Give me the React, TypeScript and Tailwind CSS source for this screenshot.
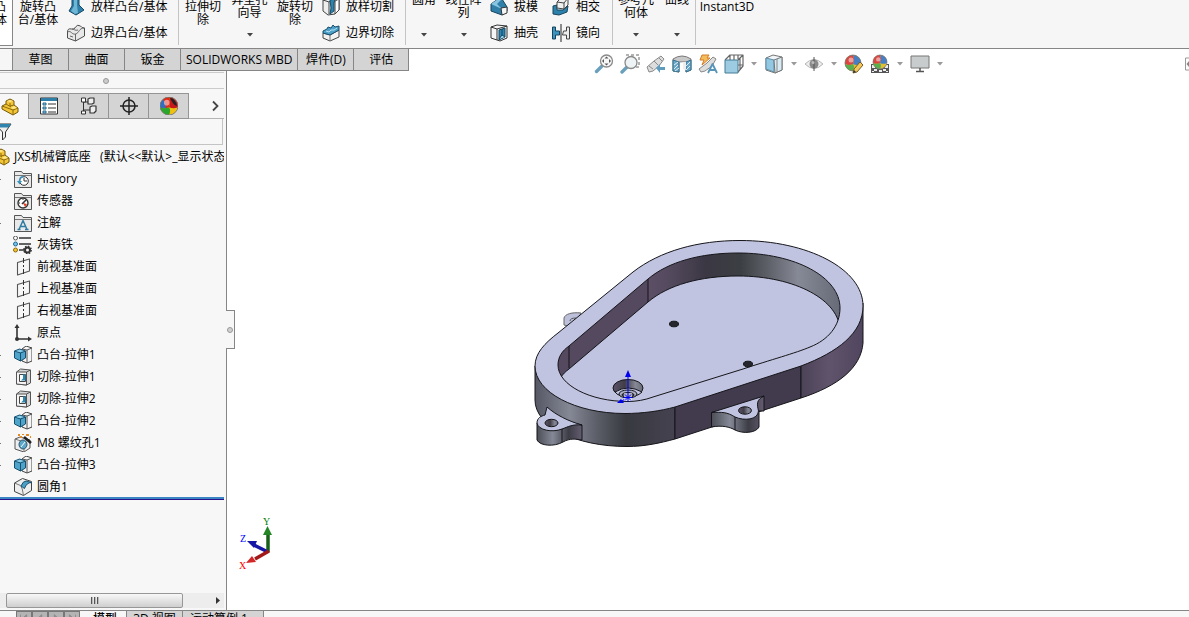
import React from "react";

type P = { children?: React.ReactNode };

const Icon = ({ children, size = "w-[18px] h-[18px]" }: P & { size?: string }) => (
  <svg viewBox="0 0 18 18" className={`${size} shrink-0`} strokeLinejoin="round" aria-hidden="true">
    {children}
  </svg>
);

/* ---------- ribbon icons ---------- */
const LoftBoss = () => (
  <Icon>
    <path d="M5 -2h7v9l5 5-8 5-7-4 3-5z" fill="#2f7fa8" stroke="#174a66" />
    <path d="M7 -2h3v9l1 8-3 1-4-3 3-5z" fill="#6db6d6" />
  </Icon>
);
const BoundaryBoss = () => (
  <Icon>
    <path d="M.500 8q0-4 4-3 3 1 4-2 2-3 5-1 1 2 4 2v8l-9 5-8-3z" fill="#e8e8e8" stroke="#4c4c4c" />
    <path d="M.500 8c4-2 4 3 8 2s3-6 9-6M8.500 10v7M5 5c2 0 3 2 6 1M3 12l3 1" fill="none" stroke="#666" />
  </Icon>
);
const LoftCut = () => (
  <Icon>
    <path d="M1 2l6-3 10 1v12l-4 4-7 1-5-4z" fill="#eee" stroke="#444" />
    <path d="M1 2l6 2v12M7 4l4-3" fill="none" stroke="#444" />
    <path d="M8 2l5-1-1 4v8l-4 3 1-6z" fill="#2f85ae" stroke="#164c68" />
    <path d="M13 3l4-2v11l-4 4z" fill="#fff" stroke="#444" />
  </Icon>
);
const BoundaryCut = () => (
  <Icon>
    <path d="M1 9l7 2 9-5v7l-9 4-7-3z" fill="#f2f2f2" stroke="#444" />
    <path d="M1 9V7l4-2 1-2 3 1 2-3 2 2 4-1v4l-9 5z" fill="#4c9fc6" stroke="#184f6d" />
    <path d="M4 7l3 1 2-2 3 0 3-2" fill="none" stroke="#b5e0f2" />
    <path d="M8 11v6" stroke="#777" />
  </Icon>
);
const Draft = () => (
  <Icon>
    <path d="M1 6l7-5 4 0 5 8v4l-5 4-11-4z" fill="#2f7fa8" stroke="#16445f" />
    <path d="M1 6l7-5h4l-5 5 5 5z" fill="#88c5e1" />
    <path d="M11 10l6-1v6l-5 2z" fill="#f5f5f5" stroke="#333" />
  </Icon>
);
const Shell = () => (
  <Icon>
    <path d="M1 3l6-2 10 1v12l-7 3-9-3z" fill="#f6f6f6" stroke="#333" />
    <path d="M1 3l6 2v11M7 5l10-3" fill="none" stroke="#333" />
    <path d="M9 6l6-2v9l-6 3z" fill="#2a86b1" stroke="#16445f" />
    <path d="M9 15l3-4 3 2M12 11V5" fill="#a6d8ee" stroke="#16445f" />
  </Icon>
);
const Intersect = () => (
  <Icon>
    <path d="M1 8l4-1v5h6l5-4-1 6-8 3-6-1z" fill="#2d82ab" stroke="#16445f" />
    <path d="M5 4l5-5 6 1v7l-4 4-7-1z" fill="#f0f0f0" stroke="#444" />
    <path d="M5 4l7 1v6M12 5l4-5" fill="none" stroke="#444" />
  </Icon>
);
const Mirror = () => (
  <Icon size="w-[18px] h-[18px]">
    <path d="M.500 3h3v4h4v4h-4v4h-3z" fill="#3c93bd" stroke="#16445f" />
    <path d="M17.500 3h-3v4h-3l-1 4h4v4h3z" fill="#eee" stroke="#444" />
    <path d="M9 0v18" stroke="#222" />
  </Icon>
);

/* ---------- heads-up toolbar icons ---------- */
const ToolIcon = ({ children }: P) => (
  <svg viewBox="0 0 20 20" className="h-5 w-5 shrink-0" strokeLinejoin="round" aria-hidden="true">
    {children}
  </svg>
);
const ZoomFit = () => (
  <ToolIcon>
    <path d="M2.500 17.500l5-5" stroke="#6ba0bd" strokeWidth="3.400" strokeLinecap="round" />
    <circle cx="12.500" cy="7" r="6" fill="#f8f8f8" stroke="#8a8a8a" strokeWidth="1.300" />
    <path d="M12.500 2.500l2 2h-4zM12.500 11.500l2-2h-4zM8 7l2-2v4zM17 7l-2-2v4z" fill="#555" />
  </ToolIcon>
);
const ZoomArea = () => (
  <ToolIcon>
    <path d="M6 1h13v12H8" fill="none" stroke="#666" strokeDasharray="3 2" />
    <path d="M2 18l5-5" stroke="#6ba0bd" strokeWidth="3.400" strokeLinecap="round" />
    <circle cx="11" cy="8.500" r="6" fill="#eef3f5" stroke="#8a8a8a" strokeWidth="1.300" />
  </ToolIcon>
);
const Previous = () => (
  <ToolIcon>
    <path d="M1 13l7-6 7-5 3 3-5 7-6 5-4 1z" fill="#ddd" stroke="#8a8a8a" />
    <path d="M8 7l4 4M13 4l3 3M3 12l4 3" stroke="#8a8a8a" fill="none" />
    <path d="M10 14l4-4v3h5v3h-5v3z" fill="#5f9cbd" />
  </ToolIcon>
);
const Section = () => (
  <ToolIcon>
    <path d="M1 5q9-6 18 0v11l-5 2V8H7v10l-6-1z" fill="#c9c9c9" stroke="#777" />
    <path d="M1 6l6 2v10l-6-1zM19 6l-5 2v10l5-2z" fill="#69a7c8" stroke="#37718f" />
    <path d="M2 11l4-3M2 15l4-4M3 17l4-3M14 12l4-4M14 16l4-4" stroke="#fff" strokeWidth=".8" />
    <path d="M7 8h7v8l-3-1V9z" fill="#eee" />
  </ToolIcon>
);
const DynamicView = () => (
  <ToolIcon>
    <path d="M1 15l8-6 6-6 3 2-4 7-7 5-4 1z" fill="#ddd" stroke="#888" />
    <path d="M4 1h7L9 4h3l-8 7 2-5H2z" fill="#f4bd5c" stroke="#d47c2a" />
    <path d="M10 19l4.500-9 4.500 9M12 16h5" stroke="#5694b8" strokeWidth="1.800" fill="none" />
  </ToolIcon>
);
const Orientation = () => (
  <ToolIcon>
    <path d="M1 6l5-5h13v11l-5 6M14 6l5-5M6 1v5M14 1v4M10 1v5M14 11h5M16 4v11" fill="none" stroke="#666" strokeWidth="1.200" />
    <rect x="1" y="6" width="13" height="13" fill="#9dcbe1" stroke="#457a95" />
  </ToolIcon>
);
const DisplayStyle = () => (
  <ToolIcon>
    <path d="M2 4l7-3 9 2v13l-7 3-9-3z" fill="#eff5f8" stroke="#757575" />
    <path d="M2 4l8 2v12l-8-3z" fill="#92c8e2" stroke="#5e8da4" />
    <path d="M10 6l8-3v13l-7 3z" fill="#d7ebf4" stroke="#757575" />
    <path d="M13 5v13" stroke="#888" />
  </ToolIcon>
);
const Eye = () => (
  <ToolIcon>
    <path d="M1 10q9-9 18 0q-9 9-18 0z" fill="#eee" stroke="#b5b5b5" />
    <circle cx="10" cy="10" r="4.500" fill="#8a8a8a" />
    <path d="M10 3v14" stroke="#555" />
    <circle cx="9" cy="8.500" r="1.500" fill="#bbb" />
  </ToolIcon>
);
const Ball = ({ cx = 9, cy = 9, r = 8, vivid = false }: { cx?: number; cy?: number; r?: number; vivid?: boolean }) => (
  <g transform={`translate(${cx} ${cy}) scale(${r / 8})`}>
    <circle r="8" fill={vivid ? "#f0c010" : "#e2bd35"} />
    <path d="M0 -8A8 8 0 0 0 -8 1Q-4 3 0 1Q2 -4 0 -8z" fill={vivid ? "#e02818" : "#db4640"} />
    <path d="M0 -8A8 8 0 0 1 8 1Q4 3 0 1Q2 -4 0 -8z" fill={vivid ? "#c81818" : "#477fc7"} />
    <path d="M-8 1A8 8 0 0 0 0 8Q2 4 0 1Q-4 3 -8 1z" fill={vivid ? "#2ba52b" : "#5baf4d"} />
    {vivid && <path d="M-8 1A8 8 0 0 1 -5 -6Q-3 -2 -3 2Q-6 2 -8 1z" fill="#2c6fc4" />}
    <circle cx="-2" cy="-3" r="2.500" fill="#fff" opacity=".5" />
    <circle r="8" fill="none" stroke="#777" strokeWidth=".8" />
  </g>
);
const Appearance = () => (
  <ToolIcon>
    <Ball />
    <path d="M9 19l1-4 6-7 3 3-6 7z" fill="#f1c859" stroke="#765b24" />
    <path d="M9 19l1-3 2 2z" fill="#333" />
  </ToolIcon>
);
const Scene = () => (
  <ToolIcon>
    <path d="M1 10h18v9H1z" fill="#555" />
    <path d="M2 11h3v3H2zM15 11h3v3h-3zM4 15h3v2H4zM9 16h3v2H9zM13 15h3v2h-3zM2 17h2v1H2zM16 17h2v1h-2z" fill="#eee" />
    <Ball cx={10} cy={8} r={7} />
  </ToolIcon>
);
const Monitor = () => (
  <ToolIcon>
    <rect x="1" y="2" width="18" height="12" fill="#c9cccc" stroke="#777" />
    <path d="M10 14v3M6 17.500h8" stroke="#555" strokeWidth="1.500" />
  </ToolIcon>
);

/* ---------- feature tree icons ---------- */
const PartIcon = () => (
  <Icon>
    <path d="M1 8l4-2V3l4-2 4 2v4l4 3v4l-5 3-11-6z" fill="#f3c637" stroke="#765809" />
    <path d="M5 6l5 3M9 5v3l4-1M12 12l5-2M12 12v5M1 8l11 4" fill="none" stroke="#8b6a0d" />
    <path d="M6 3l3-1 3 1-3 1zM10 10l3-2 3 2-4 1z" fill="#ffe88c" />
  </Icon>
);
const Folder = ({ children }: P) => (
  <Icon>
    <path d="M.500 3V1.500h7L9 3.500h8.500v14H.500z" fill="#e9e9e9" stroke="#555" />
    <path d="M1 5.500h16" stroke="#777" />
    {children}
  </Icon>
);
const HistoryIcon = () => (
  <Folder>
    <circle cx="10" cy="11" r="4.300" fill="#fff" stroke="#333" />
    <path d="M10 8v3h3" fill="none" stroke="#333" />
    <path d="M3 11h5l-2.500 3.500z" fill="#3a91bd" />
    <path d="M5.500 11q0-4 4-4.500" fill="none" stroke="#3a91bd" strokeWidth="1.500" />
  </Folder>
);
const SensorIcon = () => (
  <Folder>
    <circle cx="9" cy="11" r="5" fill="#fff" stroke="#333" strokeWidth="1.400" />
    <path d="M9 11l4 1-2 3z" fill="#e43a20" />
    <path d="M8 12l4-4" stroke="#333" strokeWidth="1.600" />
    <path d="M5 11h1M9 7v1" stroke="#333" />
  </Folder>
);
const NoteIcon = () => (
  <Folder>
    <path d="M5 15.500l4-9 4 9M6.500 12.500h5M3.500 15.500h3M11 15.500h3.500" fill="none" stroke="#2f7ba3" strokeWidth="1.500" />
  </Folder>
);
const MaterialIcon = () => (
  <svg viewBox="0 0 19 18" className="-ml-px h-[18px] w-[19px] shrink-0" aria-hidden="true">
    <path d="M6 2h12M6 8h12M6 14h5" stroke="#333" strokeWidth="1.600" />
    <circle cx="2.500" cy="2" r="2" fill="#fff" stroke="#555" />
    <circle cx="2.500" cy="8" r="2" fill="#70c4ee" stroke="#25678d" />
    <circle cx="2.500" cy="14" r="2" fill="#f5c52c" stroke="#8b6a0d" />
    <circle cx="14.500" cy="14" r="2.500" fill="none" stroke="#333" strokeWidth="2" />
    <circle cx="14.500" cy="14" r="3.700" fill="none" stroke="#333" strokeWidth="1.400" strokeDasharray="1.500 1.400" />
  </svg>
);
const PlaneIcon = () => (
  <Icon>
    <path d="M3.500 4.500l12-3.500v12l-12 4z" fill="none" stroke="#555" strokeWidth="1.100" />
    <path d="M9.500 0v18" stroke="#333" strokeDasharray="5 2 2 2" />
  </Icon>
);
const OriginIcon = () => (
  <Icon>
    <path d="M3 3v12h12" fill="none" stroke="#333" strokeWidth="1.600" />
    <path d="M3 0l2.500 4h-5zM18 15l-4-2.500v5z" fill="#333" />
    <circle cx="3" cy="15" r="2" fill="#333" />
  </Icon>
);
const BossIcon = () => (
  <Icon>
    <path d="M8 3l4-3 6 2v13l-5 2-5-2z" fill="#f5f5f5" stroke="#444" />
    <path d="M8 3l5 1v13M13 4l5-2" fill="none" stroke="#555" />
    <path d="M.500 5l5-2 6 2v7l-5 3-6-3z" fill="#4ea3cb" stroke="#18506e" />
    <path d="M.500 5l6 2v8M6.500 7l5-2" fill="none" stroke="#18506e" />
    <path d="M2 5l4-1 4 1-4 1z" fill="#9ad6ef" />
  </Icon>
);
const CutIcon = () => (
  <Icon>
    <path d="M2.500 4l4-3 10 1v13l-4 2-10-1z" fill="#d6d6d6" stroke="#555" />
    <path d="M2.500 4l10 0v13l-10-1z" fill="#f4f4f4" stroke="#555" />
    <path d="M12.500 4l4-2" stroke="#555" />
    <path d="M5.500 6.500h6v7h-6z" fill="#fff" stroke="#444" />
    <path d="M7 12.500l2-2v-4h2.500v6z" fill="#2d87b3" />
  </Icon>
);
const HoleIcon = () => (
  <Icon>
    <path d="M1 5l5-2 10 3v8l-6 4-9-3z" fill="#eee" stroke="#555" />
    <path d="M1 5l9 3v10" fill="none" stroke="#777" />
    <ellipse cx="9" cy="10.500" rx="4" ry="4.500" fill="#5ca7ca" stroke="#2b536a" />
    <path d="M7 13l4-5" stroke="#fff" />
    <path d="M10 3l7 6" stroke="#222" strokeWidth="2.600" />
    <path d="M4 1h2M8 0h2M12 1h3M6 3h2M16 3h1" stroke="#e58a22" strokeWidth="2" />
  </Icon>
);
const FilletIcon = () => (
  <Icon>
    <path d="M.500 5l8-4.500 9 3v9l-8 5-9-4z" fill="#eee" stroke="#444" />
    <path d="M.500 5l6 2.500q2 2 3 10" fill="none" stroke="#777" />
    <path d="M7 8q2-5 5-5l5.500 1.500q-5 0-7 6z" fill="#4ba0c8" stroke="#1b526f" />
  </Icon>
);

/* ---------- building blocks ---------- */
const Caret = ({ light = false }: { light?: boolean }) => (
  <svg viewBox="0 0 6 4" className="h-1 w-1.5 shrink-0" aria-hidden="true">
    <path d="M0 0h6L3 3.500z" fill={light ? "#999" : "#444"} />
  </svg>
);

const Big = ({ lines, w, menu = false }: { lines: string[]; w: string; menu?: boolean }) => (
  <button className={`flex shrink-0 flex-col items-center ${w} ${menu ? "h-[55px]" : "h-[48px]"}`}>
    {lines.map((l) => (
      <span key={l} className="h-[13px] leading-[13px]">{l}</span>
    ))}
    {menu && <span className="mt-auto mb-[11px] flex"><Caret /></span>}
  </button>
);

const Pair = ({ items, w }: { items: [React.ReactNode, string][]; w: string }) => (
  <div className={`flex h-[54px] shrink-0 flex-col ${w}`}>
    {items.map(([icon, label]) => (
      <button key={label} className="flex h-[26px] items-center gap-[6px]">
        {icon}
        <span>{label}</span>
      </button>
    ))}
  </div>
);

const Sep = () => <div className="mb-[3px] h-[58px] w-px shrink-0 bg-[#c4c4c4]" />;

const Ribbon = () => (
  <header className="flex h-[49px] shrink-0 items-end overflow-hidden border-b border-[#868686] bg-[#f6f6f6]">
    <div className="mb-[2px] flex h-[60px] w-[13px] shrink-0 justify-end border-r border-b border-[#868686] bg-white pt-[14px] pr-[5px]">
      <button className="flex flex-col items-end">
        <span className="h-[13px] pr-px leading-[13px]">拉伸凸</span>
        <span className="h-[13px] leading-[13px]">台/基体</span>
      </button>
    </div>
    <Big lines={["旋转凸", "台/基体"]} w="w-[50px]" />
    <div className="w-1 shrink-0" />
    <Pair w="w-[111px]" items={[[<LoftBoss />, "放样凸台/基体"], [<BoundaryBoss />, "边界凸台/基体"]]} />
    <Sep />
    <Big lines={["拉伸切", "除"]} w="w-[48px]" />
    <Big lines={["异型孔", "向导"]} w="w-[45px]" menu />
    <Big lines={["旋转切", "除"]} w="w-[46px]" />
    <div className="w-1 shrink-0" />
    <Pair w="w-[83px]" items={[[<LoftCut />, "放样切割"], [<BoundaryCut />, "边界切除"]]} />
    <Sep />
    <Big lines={["圆角"]} w="w-[36px]" menu />
    <Big lines={["线性阵", "列"]} w="w-[43px]" menu />
    <div className="w-[5px] shrink-0" />
    <Pair w="w-[62px]" items={[[<Draft />, "拔模"], [<Shell />, "抽壳"]]} />
    <Pair w="w-[60px]" items={[[<Intersect />, "相交"], [<Mirror />, "镜向"]]} />
    <Sep />
    <Big lines={["参考几", "何体"]} w="w-[46px]" menu />
    <Big lines={["曲线"]} w="w-[36px]" menu />
    <Sep />
    <Big lines={["Instant3D"]} w="w-[62px]" />
  </header>
);

const Tabs = () => (
  <nav className="flex h-[22px] shrink-0 border-b border-[#868686]">
    <div className="w-3 bg-[#f6f6f6]" />
    {["草图", "曲面", "钣金", "SOLIDWORKS MBD", "焊件(D)", "评估"].map((t, i) => (
      <button
        key={t}
        className={`min-w-14 border-[#868686] bg-[#d4d4d4] px-[5px] leading-[21px] ${i === 5 ? "border-x" : "border-l"}`}
      >
        {t}
      </button>
    ))}
  </nav>
);

const HeadsUp = () => (
  <div className="flex flex-1 items-start pt-[5px] pl-[185px]">
    <div className="flex items-center gap-[6px]">
      <button aria-label="整屏显示全图"><ZoomFit /></button>
      <button aria-label="局部放大"><ZoomArea /></button>
      <button aria-label="上一视图"><Previous /></button>
      <button aria-label="剖面视图"><Section /></button>
      <button aria-label="动态注解视图"><DynamicView /></button>
      <button aria-label="视图定向" className="flex items-center gap-[7px]"><Orientation /><Caret light /></button>
      <button aria-label="显示样式" className="ml-px flex items-center gap-[7px]"><DisplayStyle /><Caret light /></button>
      <button aria-label="隐藏/显示项目" className="ml-px flex items-center gap-[7px]"><Eye /><Caret light /></button>
      <button aria-label="编辑外观" className="ml-px"><Appearance /></button>
      <button aria-label="应用布景" className="flex items-center gap-[7px]"><Scene /><Caret light /></button>
      <button aria-label="视图设置" className="ml-px flex items-center gap-[7px]"><Monitor /><Caret light /></button>
    </div>
    <svg viewBox="0 0 4 14" className="mt-[3px] ml-auto h-[14px] w-1" aria-hidden="true">
      <path d="M4 1H.500v12H4" fill="none" stroke="#999" />
      <path d="M4 4v6L1.500 7z" fill="#888" />
    </svg>
  </div>
);

const panelTabs: [string, React.ReactNode][] = [
  ["属性", (
    <Icon>
      <path d="M.500 1h17v16H.500z" fill="#fff" stroke="#333" />
      <path d="M1 2.500h16" stroke="#2d7fa9" strokeWidth="3" />
      <path d="M3 6h3v2H3zM3 10h3v2H3zM3 14h3v2H3z" fill="#8bd0ee" stroke="#25678d" />
      <path d="M8 7h8M8 11h8M8 15h8" stroke="#333" strokeWidth="1.200" />
    </Icon>
  )],
  ["配置", (
    <Icon>
      <path d="M3.500 4v13M4 5h5M4 13h6" fill="none" stroke="#333" />
      <path d="M1.500 1h4v4h-4zM1.500 14h4v3h-4z" fill="#fff" stroke="#333" />
      <path d="M8 2l2-1h4v5l-2 1H8zM10 10l2-1h4v5l-2 2h-4z" fill="#eee" stroke="#333" strokeWidth="1.200" />
    </Icon>
  )],
  ["尺寸", (
    <Icon>
      <circle cx="9" cy="9" r="6" fill="none" stroke="#222" strokeWidth="1.500" />
      <path d="M9 0v18M0 9h18" stroke="#222" strokeWidth="1.500" />
    </Icon>
  )],
  ["显示", (
    <Icon>
      <Ball vivid r={9} />
      <path d="M10 1q5 0 7 8-4-1-7-8z" fill="#222" />
    </Icon>
  )],
];

const tree: [React.ReactNode, string, boolean][] = [
  [<HistoryIcon />, "History", true],
  [<SensorIcon />, "传感器", false],
  [<NoteIcon />, "注解", true],
  [<MaterialIcon />, "灰铸铁", false],
  [<PlaneIcon />, "前视基准面", false],
  [<PlaneIcon />, "上视基准面", false],
  [<PlaneIcon />, "右视基准面", false],
  [<OriginIcon />, "原点", false],
  [<BossIcon />, "凸台-拉伸1", true],
  [<CutIcon />, "切除-拉伸1", true],
  [<CutIcon />, "切除-拉伸2", true],
  [<BossIcon />, "凸台-拉伸2", true],
  [<HoleIcon />, "M8 螺纹孔1", true],
  [<BossIcon />, "凸台-拉伸3", true],
  [<FilletIcon />, "圆角1", false],
];

const SidePanel = () => (
  <aside className="relative flex w-[227px] shrink-0 flex-col border-r border-[#868686] bg-[#f7f7f7] pr-0.5">
    <div className="mt-px flex h-[17px] shrink-0 items-center justify-center border-y border-[#cbcbcb] pr-3">
      <span className="h-[6px] w-[6px] rounded-full border border-[#999] bg-[#ccc]" />
    </div>
    <div className="mt-1 flex h-[26px] shrink-0">
      <button aria-label="特征树" className="flex w-7 items-center justify-end border-t border-[#aaa] pr-[9px]">
        <PartIcon />
      </button>
      {panelTabs.map(([name, icon], i) => (
        <button
          key={name}
          aria-label={name}
          className={`flex items-center justify-center border-y border-l border-[#959595] bg-[#d4d4d4] ${i === 3 ? "w-[41px] border-r" : "w-10"}`}
        >
          {icon}
        </button>
      ))}
      <button aria-label="更多" className="flex flex-1 items-center justify-end border-b border-[#b5b5b5] pr-[5px]">
        <svg viewBox="0 0 7 12" className="h-3 w-[7px]" aria-hidden="true">
          <path d="M1 1.500L5.500 6 1 10.500" fill="none" stroke="#444" strokeWidth="1.800" />
        </svg>
      </button>
    </div>
    <label className="mr-px flex h-[26px] shrink-0 items-center border-r border-b border-[#c4c4c4]">
      <svg viewBox="0 0 12 18" className="h-[18px] w-3" aria-hidden="true">
        <path d="M-5 1h16L5.500 9v5l-3 3V9z" fill="#eee" stroke="#333" />
        <path d="M-5 1h16L8.500 4.500H-2z" fill="#2f83ad" />
      </svg>
      <input aria-label="过滤器" className="min-w-0 flex-1 bg-transparent outline-none" />
    </label>
    <div className="mt-px flex h-[22px] shrink-0 items-center gap-1 overflow-hidden">
      <div className="flex w-[10px] shrink-0 justify-end"><PartIcon /></div>
      <span className="whitespace-pre">JXS机械臂底座   (默认&lt;&lt;默认&gt;_显示状态 1&gt;)</span>
    </div>
    <ul>
      {tree.map(([icon, label, more]) => (
        <li key={label} className="flex h-[22px] items-center">
          <span className={`h-px w-px ${more ? "bg-[#777]" : ""}`} />
          <span className="ml-[13px] flex w-[23px] shrink-0">{icon}</span>
          <span>{label}</span>
        </li>
      ))}
    </ul>
    <div className="-mt-px h-[3px] shrink-0 border-b border-[#2a128a] bg-[#3a86c5]" />
    <div className="mt-auto mb-[2px] flex h-[15px] shrink-0 items-center bg-[#ededed] pl-[6px]">
      <div className="flex h-[15px] w-[177px] items-center justify-center gap-px rounded-[2px] border border-[#979797] bg-linear-to-b from-[#f8f8f8] to-[#cfcfcf]">
        {[0, 1, 2].map((k) => (
          <span key={k} className="h-[7px] w-[2px] border-l border-[#555] bg-[#bbb]" />
        ))}
      </div>
      <svg viewBox="0 0 4 7" className="mr-1 ml-auto h-[7px] w-1" aria-hidden="true">
        <path d="M0 0l4 3.500L0 7z" fill="#333" />
      </svg>
    </div>
    <button
      aria-label="折叠面板"
      className="absolute top-[239px] left-[226px] flex h-[39px] w-[9px] items-center justify-center border-y border-r border-[#868686] bg-[#f7f7f7]"
    >
      <span className="h-[6px] w-[6px] shrink-0 rounded-full border border-[#999] bg-[#d0d0d0]" />
    </button>
  </aside>
);

const RIM =
  "M558 365C558 357 562 351 569 346L648 279C668 262 700 253 738 253C795 253 840 277 840 308C840 326 828 340 810 347C796 353 770 360 743 369L653 397C645 400 636 401.500 628 401.500C590 401.500 558 385 558 365Z";

const Viewport = () => (
  <main className="min-w-0 flex-1">
    <svg viewBox="227 71 962 539" className="block h-full w-full" role="img" aria-label="JXS机械臂底座">
      <defs>
        <linearGradient id="side" gradientUnits="userSpaceOnUse" x1="535" x2="675" y1="0" y2="0">
          <stop offset="0" stopColor="#555864" />
          <stop offset=".25" stopColor="#858895" />
          <stop offset=".45" stopColor="#5a5d66" />
          <stop offset=".65" stopColor="#383a40" />
          <stop offset="1" stopColor="#454250" />
        </linearGradient>
        <linearGradient id="end" gradientUnits="userSpaceOnUse" x1="801" x2="863" y1="0" y2="0">
          <stop offset="0" stopColor="#4c4357" />
          <stop offset=".45" stopColor="#60536c" />
          <stop offset="1" stopColor="#51465f" />
        </linearGradient>
        <linearGradient id="wall" gradientUnits="userSpaceOnUse" x1="648" x2="840" y1="0" y2="0">
          <stop offset="0" stopColor="#5c4f66" />
          <stop offset=".12" stopColor="#53495d" />
          <stop offset=".3" stopColor="#3b3743" />
          <stop offset=".48" stopColor="#3b3f43" />
          <stop offset=".62" stopColor="#5c5f66" />
          <stop offset=".78" stopColor="#868996" />
          <stop offset="1" stopColor="#676a77" />
        </linearGradient>
        <linearGradient id="lug" x1="0" x2="1" y1="0" y2="0">
          <stop offset="0" stopColor="#4b4e56" />
          <stop offset=".35" stopColor="#858997" />
          <stop offset=".7" stopColor="#3c3d45" />
          <stop offset="1" stopColor="#655c71" />
        </linearGradient>
        <linearGradient id="bore" x1="0" x2="1" y1="0" y2="0">
          <stop offset="0" stopColor="#5c5268" />
          <stop offset=".4" stopColor="#3f3d47" />
          <stop offset=".75" stopColor="#858895" />
          <stop offset="1" stopColor="#6a6d79" />
        </linearGradient>
        <clipPath id="pocket"><path d={RIM} /></clipPath>
      </defs>

      <g stroke="#15151a" strokeWidth="1" strokeLinejoin="round">
        <path d="M564 325v-7C565 314 572 312 581 313L578 319L568 326Z" fill="#bcc0da" stroke="#666" />
        <path d="M570 321q0-3 6-3" fill="none" stroke="#555" />
        <path d="M535 366V400C535 426 575 446.500 627 446.500C645 446.500 660 443 675 439V400Z" fill="url(#side)" />
        <path d="M675 400L801 360V398L675 439Z" fill="#423b4d" />
        <path d="M801 360L863 303V343C861 368 838 386 801 398Z" fill="url(#end)" />
        <path
          d="M535 366C535 353 545 343 558 333L633 272C660 251 698 240.500 740 240.500C808 240.500 863 269 863 306C863 333 838 352 801 366L675 407C660 411 643 413.500 625 413.500C575 413.500 535 392 535 366Z"
          fill="#c0c4e0"
        />
        <g clipPath="url(#pocket)">
          <path d="M550 250H648V310L560 400H550Z" fill="#54495e" stroke="none" />
          <path d="M648 250H845V330H648Z" fill="url(#wall)" stroke="none" />
          <path d={RIM} transform="translate(0 23)" fill="#c0c4e0" />
          <path d="M560 395L563 376L569 372L650 330L837 331L700 395Z" fill="#c0c4e0" stroke="none" />
          <path d="M648 279v23M569 346v22" />
        </g>
        <path d={RIM} fill="none" />

        <ellipse cx="674" cy="324" rx="4.500" ry="2.800" fill="#25272c" />
        <ellipse cx="748" cy="364" rx="4.500" ry="2.800" fill="#25272c" />
        <ellipse cx="628" cy="388" rx="15" ry="8.500" fill="url(#bore)" />
        <path d="M615 392q13-8 27 0q-5 5-14 5t-13-5z" fill="#c0c4e0" />
        <ellipse cx="628" cy="394" rx="9" ry="4" fill="#aaaec3" />
        <ellipse cx="628" cy="395" rx="6" ry="2.500" fill="#4c4e57" />

        <path d="M537 423V440C540 446 554 447 563 442C570 438 576 439 582 440V425L560 420Z" fill="url(#lug)" />
        <path d="M547 407C556 415 568 421 582 425C572 424 568 427 562 429C552 433 538 430 537 423C537 418 541 416 545 415Z" fill="#c0c4e0" />
        <path d="M562 429v13" />
        <ellipse cx="551.500" cy="423" rx="6.500" ry="3.700" fill="url(#bore)" />

        <path d="M711.500 412.500V427C722 425 730 427 735 430C743 434 756 433 759 427V411L764 411V396L745 404Z" fill="url(#lug)" />
        <path d="M711.500 412.500L764 396C756 400 757 404 758.500 411C758 420 744 421 735 417C727 412 722 412 711.500 412.500Z" fill="#c0c4e0" />
        <path d="M735 417v13" />
        <ellipse cx="745" cy="410.500" rx="6.500" ry="3.700" fill="url(#bore)" />
      </g>

      <g stroke="#0000f0" fill="#0000f0">
        <path d="M628 397V375M628 397l-6 4" />
        <path d="M628 370l3 7h-6zM617 403l4-4 3 4z" stroke="none" />
        <rect x="624" y="393" width="8" height="8" fill="#fff" stroke="none" opacity=".6" />
        <path d="M623.500 397.500h9M628 393v9M625 394.500l6 6M631 394.500l-6 6" />
      </g>

      <g strokeLinecap="butt">
        <path d="M268 552V534" stroke="#176017" strokeWidth="3.500" />
        <path d="M267.500 526l4.500 9h-9z" fill="#258525" />
        <path d="M268 552L254 545" stroke="#1717a5" strokeWidth="3.500" />
        <path d="M247 541l10 0-3 7z" fill="#1717a5" />
        <path d="M269 551L255 559" stroke="#a31919" strokeWidth="3.500" />
        <path d="M246 563l6-7 4 6z" fill="#d32626" />
      </g>
      <g fontFamily="Liberation Serif, serif" fontSize="10">
        <text x="263" y="525" fill="#008000">Y</text>
        <text x="240" y="542" fill="#0000ff">Z</text>
        <text x="239" y="569" fill="#ff0000">X</text>
      </g>
    </svg>
  </main>
);

const navShapes = ["M4 2v9M11 2L6 6.500l5 4.500z", "M10 2L5 6.500l5 4.500z", "M6 2l5 4.500L6 11z", "M12 2v9M5 2l5 4.500L5 11z"];

const BottomTabs = () => (
  <footer className="flex h-[7px] shrink-0 items-start overflow-hidden border-t border-[#868686] bg-[#f7f7f7] pl-4 leading-[14px]">
    {navShapes.map((d) => (
      <button key={d} aria-label="滚动标签" className="h-4 w-4 border border-[#777] bg-[#b4b4b4]">
        <svg viewBox="0 0 16 14" className="h-3.5 w-3.5" aria-hidden="true">
          <path d={d} fill="#929292" stroke="#8a8a8a" />
        </svg>
      </button>
    ))}
    <button className="h-4 w-[46px] pl-1 font-medium">模型</button>
    <button className="h-4 w-[56px] border-l border-[#868686] bg-[#d4d4d4]">3D 视图</button>
    <button className="h-4 w-[82px] border-x border-[#868686] bg-[#d4d4d4] pr-2">运动算例 1</button>
  </footer>
);

export default function App() {
  return (
    <div className="flex h-screen flex-col overflow-hidden bg-white font-['Open_Sans','Noto_Sans_CJK_SC',sans-serif] text-[12px] leading-[16px] whitespace-nowrap text-black">
      <Ribbon />
      <div className="flex h-[22px] shrink-0">
        <Tabs />
        <HeadsUp />
      </div>
      <div className="flex min-h-0 flex-1">
        <SidePanel />
        <Viewport />
      </div>
      <BottomTabs />
    </div>
  );
}
